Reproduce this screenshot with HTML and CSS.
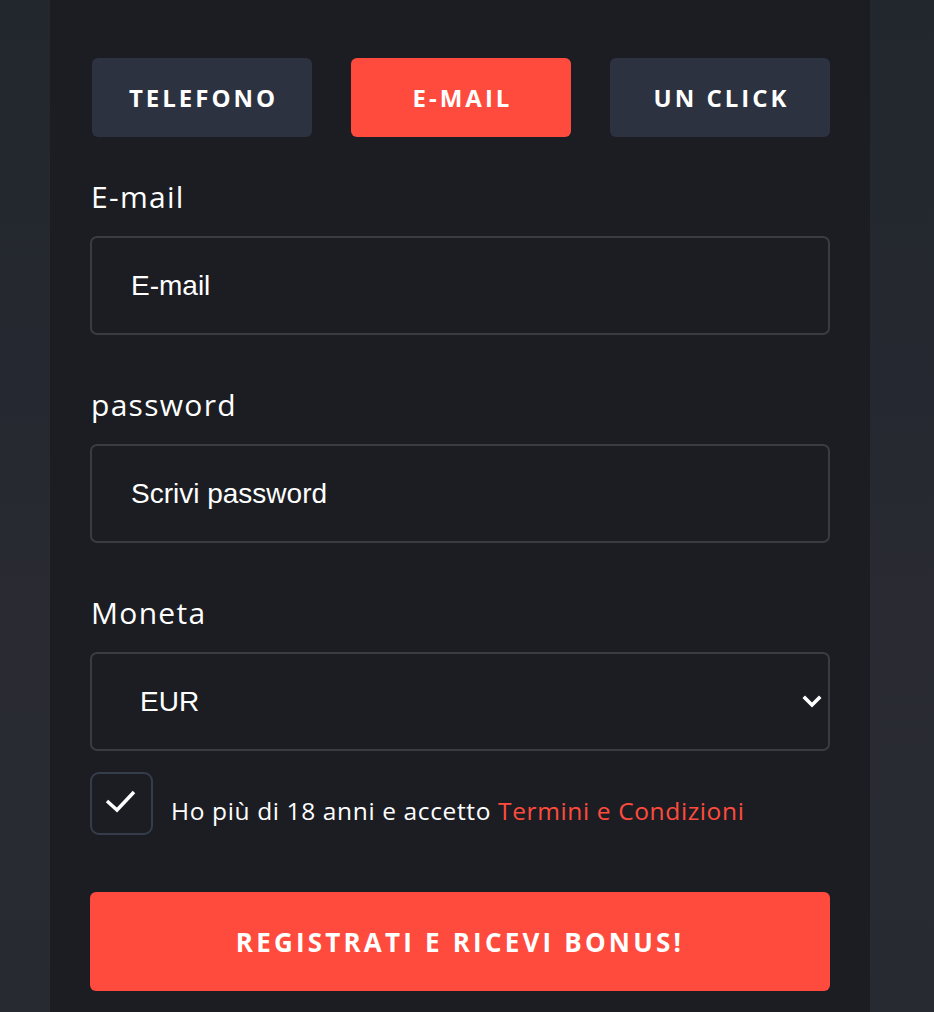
FILE: index.html
```html
<!DOCTYPE html>
<html lang="it">
<head>
<meta charset="utf-8">
<title>Registrazione</title>
<link rel="stylesheet" href="styles.css">
</head>
<body>
<div class="page">
  <div class="panel">
    <div class="tabs">
      <button class="tab" type="button">TELEFONO</button>
      <button class="tab tab-active" type="button">E-MAIL</button>
      <button class="tab" type="button">UN CLICK</button>
    </div>
    <form class="form">
      <div class="field">
        <label class="label" for="email">E-mail</label>
        <input class="control" id="email" type="text" placeholder="E-mail">
      </div>
      <div class="field">
        <label class="label" for="pwd">password</label>
        <input class="control" id="pwd" type="password" placeholder="Scrivi password">
      </div>
      <div class="field field-last">
        <label class="label" for="cur">Moneta</label>
        <div class="select-wrap">
          <select class="control select" id="cur">
            <option>EUR</option>
          </select>
          <svg class="chevron" width="20" height="13" viewBox="0 0 20 13" aria-hidden="true"><path d="M3 3 L10 10 L17 3" fill="none" stroke="#fff" stroke-width="3.6" stroke-linecap="square"/></svg>
        </div>
      </div>
      <div class="agree">
        <span class="checkbox"><svg width="32" height="24" viewBox="0 0 32 24" aria-hidden="true"><path d="M3 12 L13 21 L30 3" fill="none" stroke="#fff" stroke-width="3.5"/></svg></span>
        <span class="agree-text">Ho più di 18 anni e accetto <a class="terms" href="#">Termini e Condizioni</a></span>
      </div>
      <button class="submit" type="button">REGISTRATI E RICEVI BONUS!</button>
    </form>
  </div>
</div>
</body>
</html>
```

FILE: styles.css
```css
* { box-sizing: border-box; }
html, body { margin: 0; padding: 0; }
body {
  background: #23272d;
  font-family: "Open Sans", "DejaVu Sans", sans-serif;
  color: #fff;
}
.page {
  width: 934px;
  height: 1012px;
  overflow: hidden;
  background: linear-gradient(180deg, #22272d 0%, #252830 40%, #2a2b32 60%, #272b31 100%);
  padding-left: 50px;
}
.panel {
  width: 820px;
  min-height: 1012px;
  background: #1b1d23;
  padding: 58px 40px 0 40px;
}
.tabs {
  display: flex;
  justify-content: space-between;
  padding-left: 2px;
}
.tab {
  width: 220px;
  height: 79px;
  border: 0;
  border-radius: 6px;
  background: #2c3240;
  color: #fff;
  font-family: "Open Sans", sans-serif;
  font-weight: 700;
  font-size: 24px;
  letter-spacing: 3px;
  padding: 0 0 0 3px;
}
.tab-active { background: #ff4b3d; }
.form {
  display: flex;
  flex-direction: column;
  margin-top: 42px;
}
.field {
  display: flex;
  flex-direction: column;
  margin-bottom: 52px;
}
.field-last { margin-bottom: 21px; }
.label {
  font-size: 30px;
  line-height: 36px;
  font-weight: 500;
  letter-spacing: 1.3px;
  margin-bottom: 21px;
  padding-left: 1px;
}
.control {
  width: 740px;
  height: 99px;
  background: #1b1d23;
  border: 2px solid #3a3c42;
  border-radius: 7px;
  color: #fff;
  font-family: "Liberation Sans", Arial, sans-serif;
  font-size: 28px;
  padding: 0 0 0 39px;
  outline: none;
}
.control::placeholder { color: #fff; opacity: 1; }
.select-wrap { position: relative; }
.select {
  appearance: none;
  -webkit-appearance: none;
  padding-left: 48px;
}
.chevron {
  position: absolute;
  right: 8px;
  top: 43px;
}
.agree {
  display: flex;
  align-items: center;
  gap: 18px;
  margin-bottom: 57px;
}
.checkbox {
  width: 63px;
  height: 63px;
  border: 2px solid #353c4a;
  border-radius: 9px;
  display: flex;
  align-items: center;
  justify-content: center;
  padding-bottom: 6px;
  padding-right: 4px;
  flex: none;
}
.agree-text {
  font-size: 24.5px;
  font-weight: 500;
  letter-spacing: 0.63px;
  padding-top: 14px;
}
.terms {
  color: #ff4b3d;
  text-decoration: none;
}
.submit {
  width: 740px;
  height: 99px;
  border: 0;
  border-radius: 6px;
  background: #ff4b3d;
  color: #fff;
  font-family: "Open Sans", sans-serif;
  font-weight: 700;
  font-size: 26px;
  letter-spacing: 3.2px;
}
```
